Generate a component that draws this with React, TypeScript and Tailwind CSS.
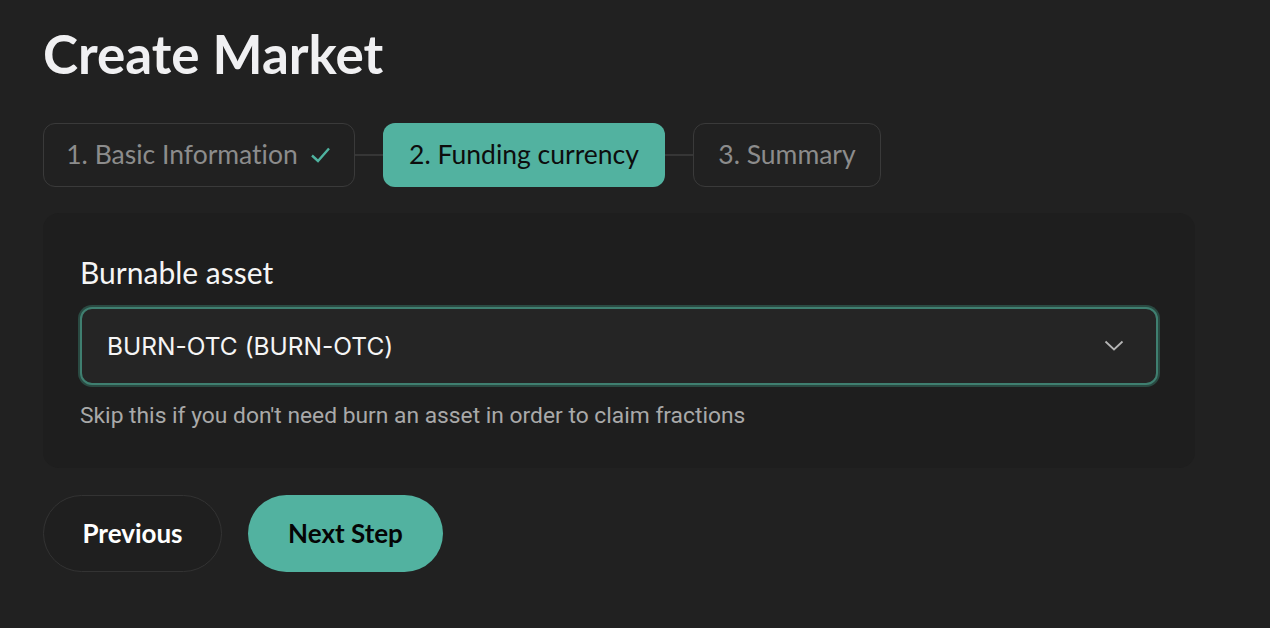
import React from 'react';

const display = { fontFamily: '"Lato", "Inter", sans-serif' };
const body = { fontFamily: 'Roboto, "Inter", sans-serif' };

function Chevron() {
  return (
    <svg width="20" height="12" viewBox="0 0 20 12" fill="none" className="text-[#b5b5b5]">
      <path d="M1.5 1.5 L10 9.5 L18.5 1.5" stroke="currentColor" strokeWidth="1.8" />
    </svg>
  );
}

export default function App() {
  const steps = [
    { label: '1. Basic Information', state: 'done', w: 'w-[312px]' },
    { label: '2. Funding currency', state: 'active', w: 'w-[282px]' },
    { label: '3. Summary', state: 'todo', w: 'w-[188px]' },
  ];

  return (
    <div className="min-h-[628px] w-full bg-[#212121] px-[43px] pt-[24px] [font-variant-ligatures:none]" style={display}>
      <h1 className="text-[53px] font-bold leading-[60px] text-[#f0f0f2]">Create Market</h1>

      <div className="mt-[39px] flex items-center">
        {steps.map((step, i) => (
          <React.Fragment key={i}>
            {i > 0 && <div className="h-[2px] w-[28px] bg-[#363636]" />}
            <div
              className={
                step.state === 'active'
                  ? `flex h-[64px] ${step.w} items-center justify-center rounded-[12px] bg-[#52b2a0] text-[26.5px] text-[#0d0d0d]`
                  : `flex h-[64px] ${step.w} items-center justify-center rounded-[12px] border border-[#3a3a3a] text-[26.5px] text-[#8c8c8c]`
              }
            >
              {step.label}
              {step.state === 'done' && (
                <svg width="22" height="18" viewBox="0 0 22 18" fill="none" className="ml-[12px]">
                  <path d="M2 9.5 L8 15 L19 2.5" stroke="#4fb3a0" strokeWidth="2.4" />
                </svg>
              )}
            </div>
          </React.Fragment>
        ))}
      </div>

      <div className="mt-[26px] w-[1152px] rounded-[16px] bg-[#1e1e1e] px-[37px] pb-[38px] pt-[42px]">
        <div className="text-[30px] leading-[34px] text-[#f5f5f5]">Burnable asset</div>
        <div className="mt-[18px] flex h-[78px] items-center justify-between rounded-[12px] border-2 border-[#3f7f70] bg-[#252525] pl-[25px] pr-[32px] ring-2 ring-[#2a4a42]">
          <span className="text-[24.5px] text-[#f5f5f5]" style={{ fontFamily: '"Inter", Roboto, sans-serif' }}>
            BURN-OTC (BURN-OTC)
          </span>
          <Chevron />
        </div>
        <p className="mt-[17px] text-[22.8px] leading-[28px] text-[#a9a9a9]" style={body}>
          Skip this if you don't need burn an asset in order to claim fractions
        </p>
      </div>

      <div className="mt-[27px] flex gap-[26px]">
        <button className="flex h-[77px] w-[179px] items-center justify-center rounded-full border border-[#333333] bg-[#1f1f1f] text-[26px] font-bold text-white">
          Previous
        </button>
        <button className="flex h-[77px] w-[195px] items-center justify-center rounded-full bg-[#52b2a0] text-[26px] font-bold text-[#050505]">
          Next Step
        </button>
      </div>
    </div>
  );
}
